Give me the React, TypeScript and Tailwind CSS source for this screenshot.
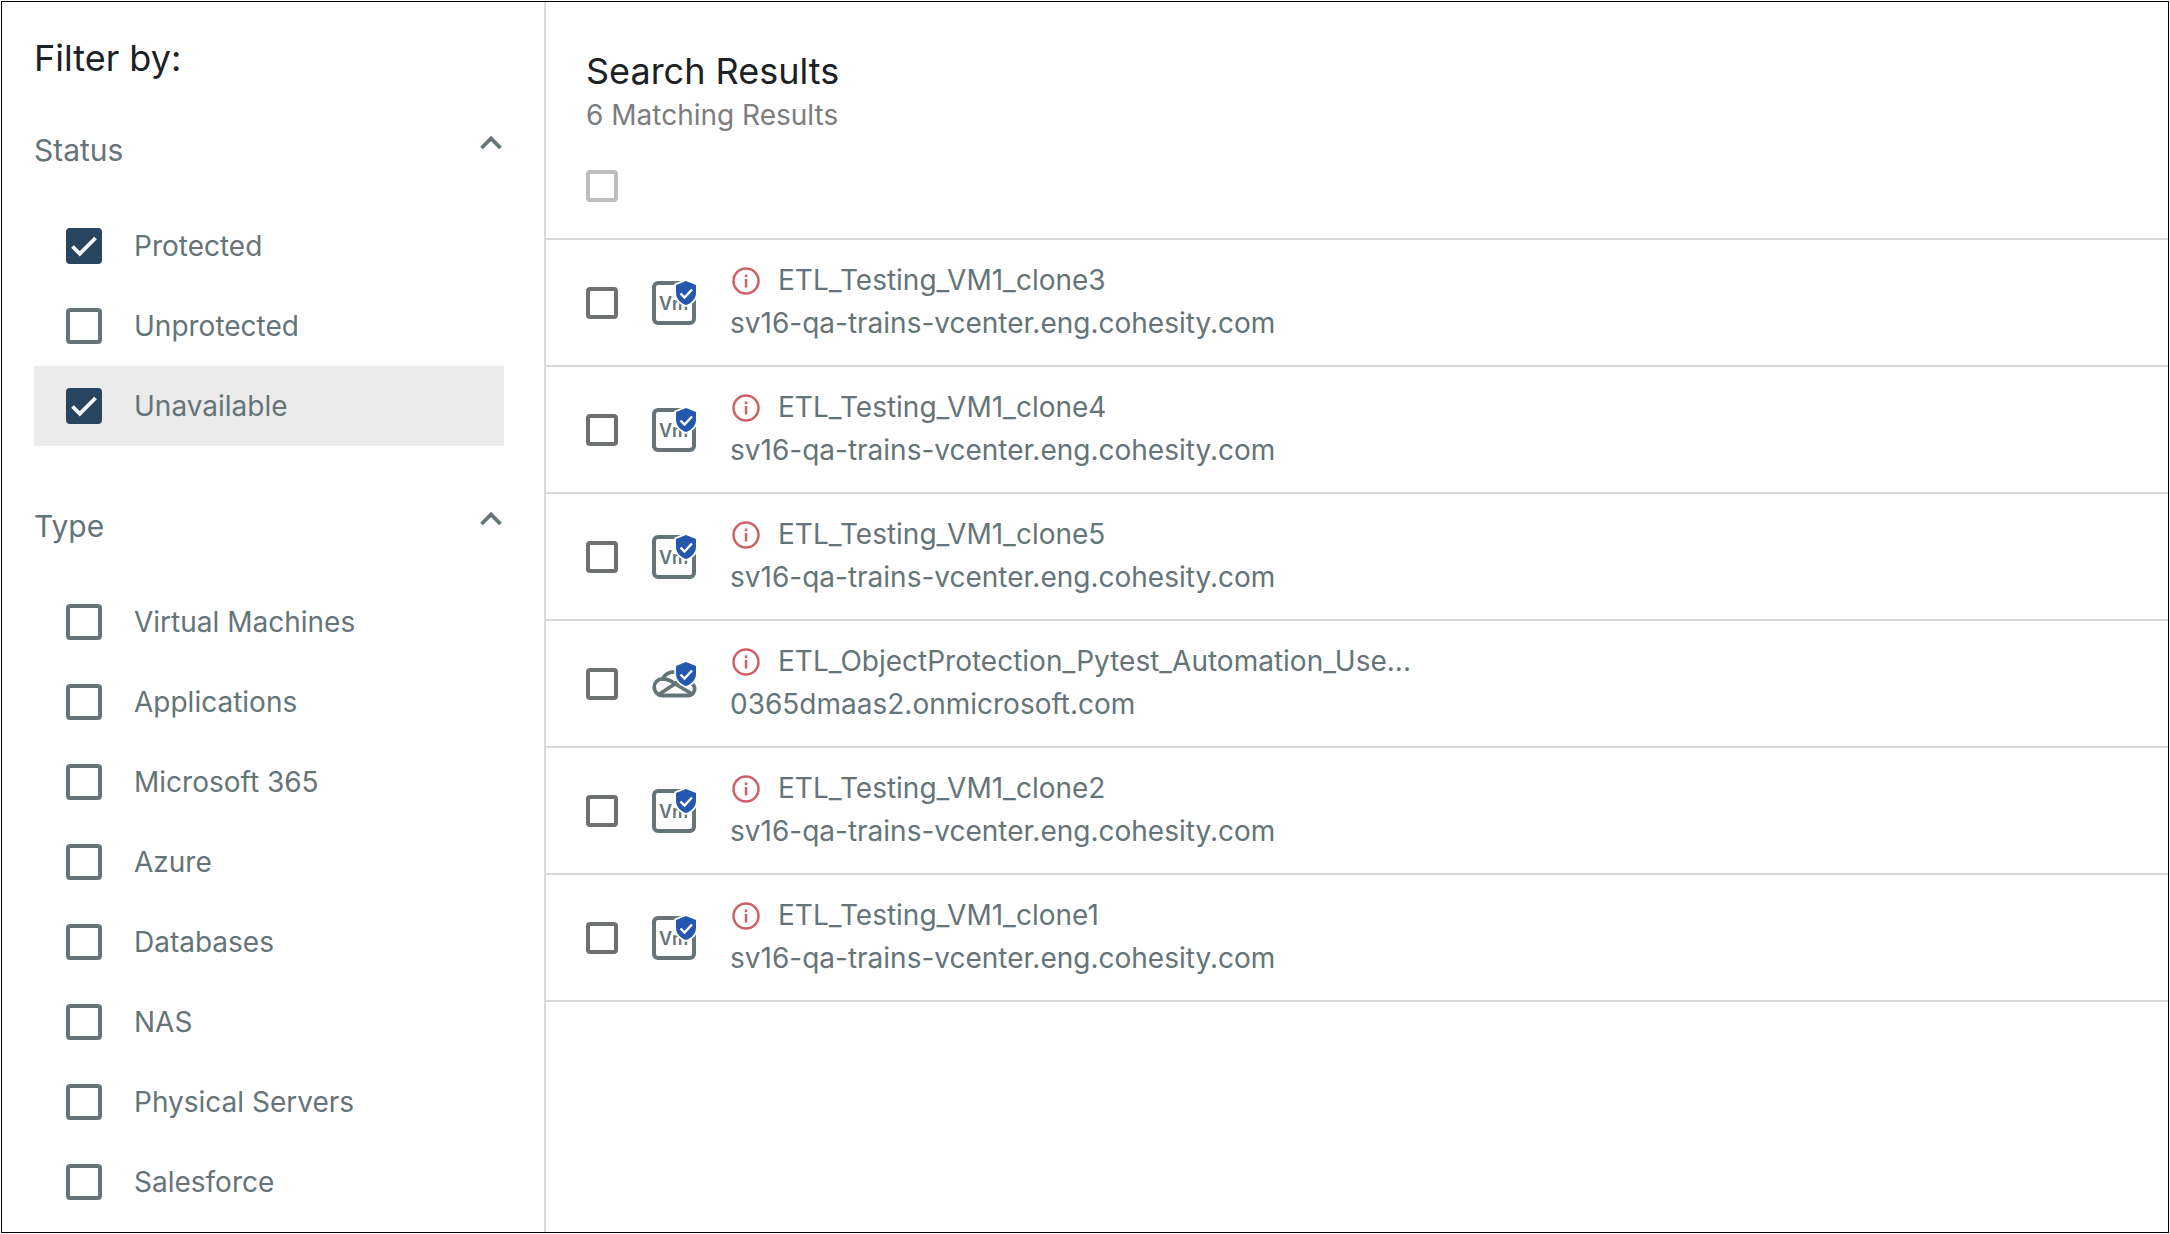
import { useState } from "react";

const statuses = [
  { label: "Protected", checked: true },
  { label: "Unprotected", checked: false },
  { label: "Unavailable", checked: true, active: true },
];

const types = [
  "Virtual Machines",
  "Applications",
  "Microsoft 365",
  "Azure",
  "Databases",
  "NAS",
  "Physical Servers",
  "Salesforce",
].map((label) => ({ label, checked: false }));

const vcenter = "sv16-qa-trains-vcenter.eng.cohesity.com";

const results = [
  { name: "ETL_Testing_VM1_clone3", source: vcenter, kind: "vm" },
  { name: "ETL_Testing_VM1_clone4", source: vcenter, kind: "vm" },
  { name: "ETL_Testing_VM1_clone5", source: vcenter, kind: "vm" },
  {
    name: "ETL_ObjectProtection_Pytest_Automation_Use...",
    source: "0365dmaas2.onmicrosoft.com",
    kind: "cloud",
  },
  { name: "ETL_Testing_VM1_clone2", source: vcenter, kind: "vm" },
  { name: "ETL_Testing_VM1_clone1", source: vcenter, kind: "vm" },
];

function Shield() {
  return (
    <>
      <path
        d="M34 0 L44 4 V11.500 C44 17.500 40 22 34 24 C28 22 24 17.500 24 11.500 V4 Z"
        fill="#2458ae"
        stroke="#fff"
        strokeWidth="3.500"
        paintOrder="stroke"
      />
      <path d="M28.500 12.500 L32.500 16.500 L40 8.500" fill="none" stroke="#fff" strokeWidth="2.400" />
    </>
  );
}

function VmIcon() {
  return (
    <svg viewBox="0 0 44 44" className="size-11 overflow-visible" role="img" aria-label="Protected virtual machine">
      <path
        d="M30 2 H6 A4 4 0 0 0 2 6 V38 A4 4 0 0 0 6 42 H38 A4 4 0 0 0 42 38 V14"
        fill="none"
        stroke="#657478"
        strokeWidth="4"
      />
      <text x="7" y="29" fontSize="18" fontWeight="600" fill="#657478">
        Vm
      </text>
      <Shield />
    </svg>
  );
}

function CloudIcon() {
  return (
    <svg viewBox="0 0 44 44" className="size-11 overflow-visible" role="img" aria-label="Protected cloud account">
      <g transform="translate(0 1)" fill="none" stroke="#657478" strokeWidth="3.800">
        <path d="M10.500 32.500 H36 A6.500 6.500 0 0 0 39.500 20.500 L37 19 M10.500 32.500 A8.300 8.300 0 0 1 10.500 15.800 C12.500 12 17 8.500 25 9" />
        <path d="M10 15.800 C13 15.500 16 16.500 19 18.200 L40 31" />
        <path d="M6 32 L23.500 20.500 C26 19 29 18.500 34 18.500" />
      </g>
      <Shield />
    </svg>
  );
}

function InfoIcon() {
  return (
    <svg viewBox="0 0 28 28" className="size-7 shrink-0" role="img" aria-label="Error">
      <circle cx="14" cy="14" r="12.500" fill="none" stroke="#cf6068" strokeWidth="2.500" />
      <rect x="12.800" y="12" width="2.500" height="8.500" fill="#cf6068" />
      <rect x="12.800" y="7.500" width="2.500" height="2.700" fill="#cf6068" />
    </svg>
  );
}

type Option = { label: string; checked: boolean; active?: boolean };

function FilterOption({ label, checked, active }: Option) {
  const [on, setOn] = useState(checked);
  return (
    <li>
      <label className={`flex h-20 items-center gap-8 pl-8 text-[28px] ${active ? "bg-[#ebebeb]" : ""}`}>
        <span className="grid size-9 shrink-0">
          <input
            type="checkbox"
            checked={on}
            onChange={() => setOn(!on)}
            className="col-start-1 row-start-1 size-9 appearance-none rounded-[4px] border-4 border-[#657478] checked:border-[#28445f] checked:bg-[#28445f]"
          />
          {on && (
            <svg viewBox="0 0 36 36" className="pointer-events-none col-start-1 row-start-1 size-9" aria-hidden="true">
              <path d="M6.500 18.500 L13.800 25.800 L29.500 10" fill="none" stroke="#f4faff" strokeWidth="3.800" />
            </svg>
          )}
        </span>
        <span>{label}</span>
      </label>
    </li>
  );
}

function FilterGroup({ title, options }: { title: string; options: Option[] }) {
  const [open, setOpen] = useState(true);
  return (
    <section>
      <h2>
        <button
          type="button"
          aria-expanded={open}
          onClick={() => setOpen(!open)}
          className="flex h-10 w-full items-start justify-between text-[30px] leading-10"
        >
          <span>{title}</span>
          <svg viewBox="0 0 24 24" className="size-6" aria-hidden="true">
            <path d="M1.500 18 L11 8.500 L20.500 18" fill="none" stroke="#657478" strokeWidth="3.800" />
          </svg>
        </button>
      </h2>
      {open && (
        <ul className="mt-9">
          {options.map((o) => (
            <FilterOption key={o.label} {...o} />
          ))}
        </ul>
      )}
    </section>
  );
}

export default function App() {
  return (
    <div className="flex min-h-screen bg-white p-px font-['Inter',sans-serif] text-[#657478]">
      <div className="flex flex-1 border border-black">
        <aside className="w-[544px] shrink-0 border-r-2 border-[#d9dbdb] pr-10 pl-8">
          <h1 className="pt-8 text-4xl leading-12 text-[#1b2124]">Filter by:</h1>
          <div className="mt-12 flex flex-col gap-[60px]">
            <FilterGroup title="Status" options={statuses} />
            <FilterGroup title="Type" options={types} />
          </div>
        </aside>
        <main className="min-w-0 flex-1">
          <header className="border-b-2 border-[#d5d9d9] px-10 pt-[47px] pb-9">
            <h2 className="text-4xl leading-11 text-[#1b2124]">Search Results</h2>
            <p className="text-[28px] leading-11 text-[#7b7d7e]">6 Matching Results</p>
            <input
              type="checkbox"
              disabled
              aria-label="Select all results"
              className="mt-[33px] block size-8 appearance-none rounded-[4px] border-4 border-[#bdbdbd]"
            />
          </header>
          <ul>
            {results.map((r) => (
              <li key={r.name} className="border-b-2 border-[#d5d9d9]">
                <label className="flex h-[125px] items-center px-10">
                  <input
                    type="checkbox"
                    className="size-8 shrink-0 appearance-none rounded-[4px] border-4 border-[#6e7172] checked:bg-[#28445f]"
                  />
                  <span className="ml-[34px] shrink-0">{r.kind === "vm" ? <VmIcon /> : <CloudIcon />}</span>
                  <span className="ml-[34px] min-w-0 pb-px text-[28px] leading-[43px]">
                    <span className="flex items-center gap-[18px] pl-0.5">
                      <InfoIcon />
                      <span className="truncate">{r.name}</span>
                    </span>
                    <span className="block truncate">{r.source}</span>
                  </span>
                </label>
              </li>
            ))}
          </ul>
        </main>
      </div>
    </div>
  );
}
